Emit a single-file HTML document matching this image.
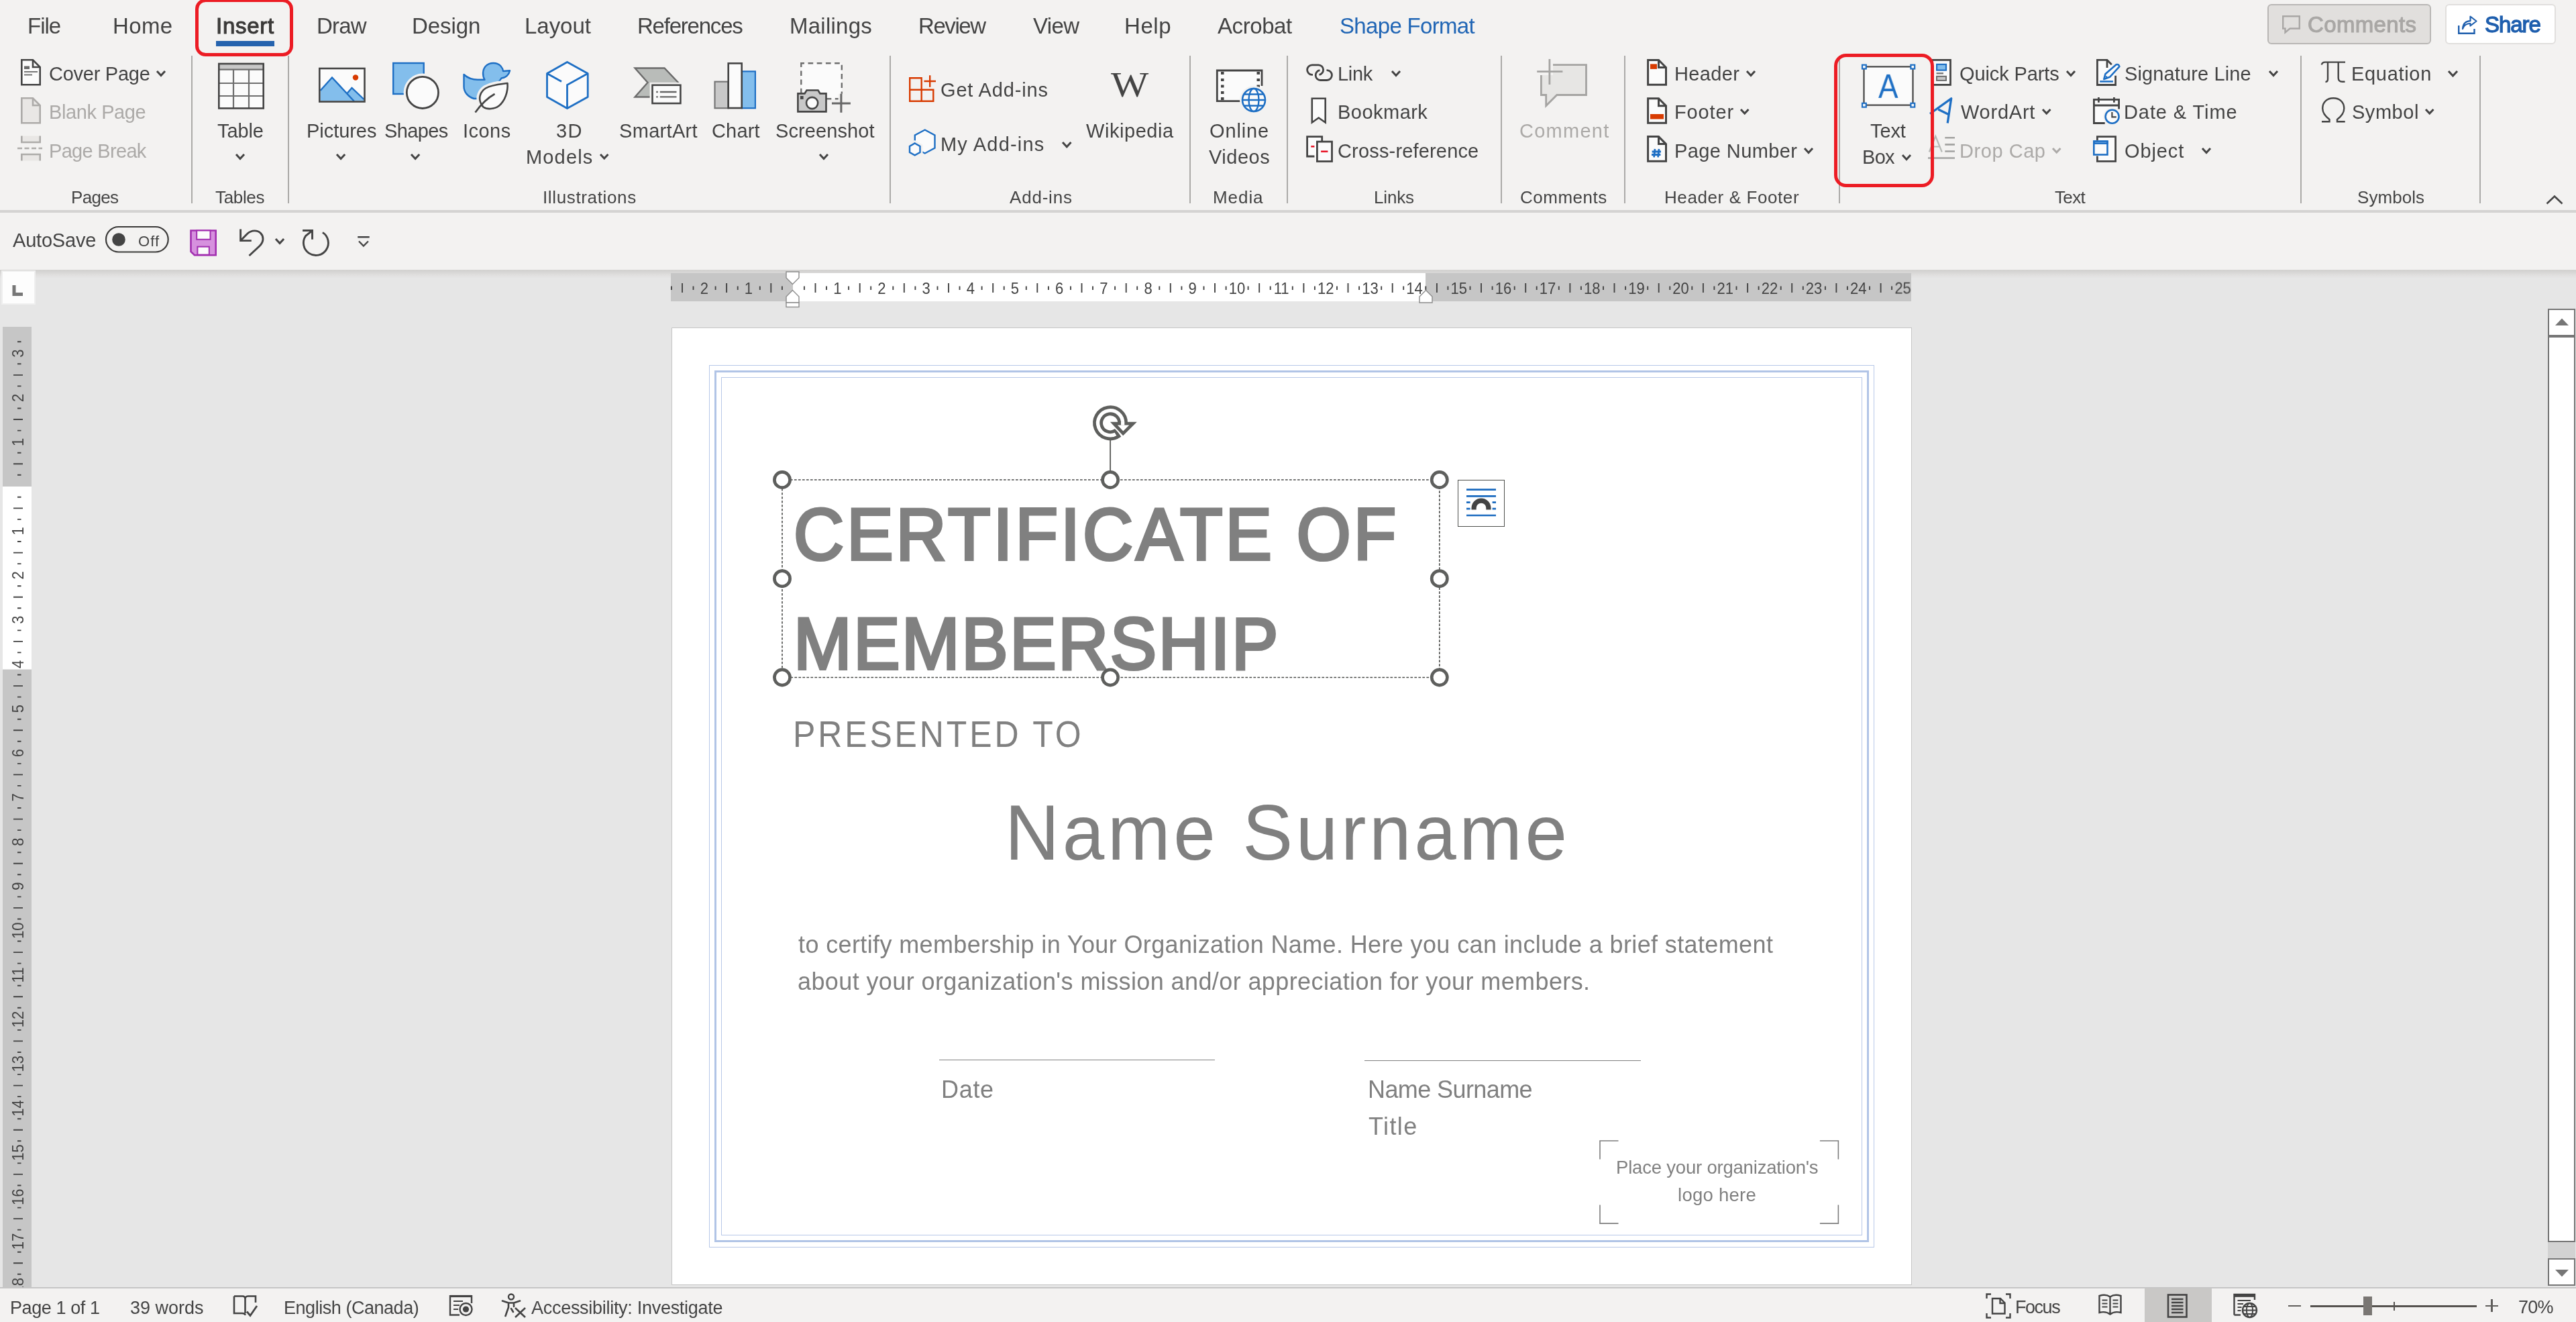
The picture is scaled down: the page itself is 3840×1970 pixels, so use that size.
<!DOCTYPE html>
<html lang="en"><head><meta charset="utf-8"><title>Certificate of Membership - Word</title>
<style>
html,body{margin:0;padding:0;}
body{width:3840px;height:1970px;overflow:hidden;background:#e6e6e6;position:relative;font-family:"Liberation Sans",sans-serif;}
.t{position:absolute;white-space:nowrap;line-height:1;display:block;-webkit-font-smoothing:antialiased;will-change:transform;}
.b{position:absolute;box-sizing:border-box;display:block;overflow:visible;}
</style></head>
<body>
<div class="b" style="left:0px;top:0px;width:3840px;height:313px;background:#f3f2f1;"></div>
<div class="b" style="left:0px;top:313px;width:3840px;height:4px;background:#d4d3d2;"></div>
<div class="b" style="left:0px;top:317px;width:3840px;height:85px;background:#f3f2f1;"></div>
<div class="b" style="left:0px;top:402px;width:3840px;height:13px;background:linear-gradient(#d2d1cf,#d6d5d4 25%,#e0dfde 60%,#e6e6e6);"></div>
<div class="b" style="left:285px;top:83px;width:2px;height:220px;background:#abaaa8;"></div>
<div class="b" style="left:429px;top:83px;width:2px;height:220px;background:#abaaa8;"></div>
<div class="b" style="left:1326px;top:83px;width:2px;height:220px;background:#abaaa8;"></div>
<div class="b" style="left:1773px;top:83px;width:2px;height:220px;background:#abaaa8;"></div>
<div class="b" style="left:1918px;top:83px;width:2px;height:220px;background:#abaaa8;"></div>
<div class="b" style="left:2237px;top:83px;width:2px;height:220px;background:#abaaa8;"></div>
<div class="b" style="left:2421px;top:83px;width:2px;height:220px;background:#abaaa8;"></div>
<div class="b" style="left:2741px;top:83px;width:2px;height:220px;background:#abaaa8;"></div>
<div class="b" style="left:3429px;top:83px;width:2px;height:220px;background:#abaaa8;"></div>
<div class="b" style="left:3696px;top:83px;width:2px;height:220px;background:#abaaa8;"></div>
<div class="b" style="left:322px;top:61px;width:87px;height:8px;background:#2563ae;"></div>
<div class="b" style="left:3380px;top:6px;width:244px;height:60px;background:#e1dfdd;border:2px solid #b9b7b5;border-radius:6px;"></div>
<div class="b" style="left:3644.5px;top:6px;width:165px;height:60px;background:#fff;border:2px solid #e1dfdd;border-radius:6px;"></div>
<div class="b" style="left:0px;top:1920px;width:3840px;height:50px;background:#f3f2f1;"></div>
<div class="b" style="left:0px;top:1918px;width:3840px;height:2px;background:#c6c6c6;"></div>
<span class="t" style="left:41.36px;top:22px;font-size:33px;font-weight:400;color:#444;letter-spacing:-1.002px;font-family:'Liberation Sans',sans-serif;">File</span>
<span class="t" style="left:168.36px;top:22px;font-size:33px;font-weight:400;color:#444;letter-spacing:0.393px;font-family:'Liberation Sans',sans-serif;">Home</span>
<span class="t" style="left:472.36px;top:22px;font-size:33px;font-weight:400;color:#444;letter-spacing:-0.805px;font-family:'Liberation Sans',sans-serif;">Draw</span>
<span class="t" style="left:614.36px;top:22px;font-size:33px;font-weight:400;color:#444;letter-spacing:-0.069px;font-family:'Liberation Sans',sans-serif;">Design</span>
<span class="t" style="left:782.36px;top:22px;font-size:33px;font-weight:400;color:#444;letter-spacing:-0.039px;font-family:'Liberation Sans',sans-serif;">Layout</span>
<span class="t" style="left:950.36px;top:22px;font-size:33px;font-weight:400;color:#444;letter-spacing:-1.222px;font-family:'Liberation Sans',sans-serif;">References</span>
<span class="t" style="left:1177.36px;top:22px;font-size:33px;font-weight:400;color:#444;letter-spacing:0.241px;font-family:'Liberation Sans',sans-serif;">Mailings</span>
<span class="t" style="left:1369.36px;top:22px;font-size:33px;font-weight:400;color:#444;letter-spacing:-1.420px;font-family:'Liberation Sans',sans-serif;">Review</span>
<span class="t" style="left:1539.84px;top:22px;font-size:33px;font-weight:400;color:#444;letter-spacing:-0.595px;font-family:'Liberation Sans',sans-serif;">View</span>
<span class="t" style="left:1676.36px;top:22px;font-size:33px;font-weight:400;color:#444;letter-spacing:0.548px;font-family:'Liberation Sans',sans-serif;">Help</span>
<span class="t" style="left:1815.00px;top:22px;font-size:33px;font-weight:400;color:#444;letter-spacing:-0.420px;font-family:'Liberation Sans',sans-serif;">Acrobat</span>
<span class="t" style="left:321.58px;top:22px;font-size:33px;font-weight:400;color:#3b3a39;letter-spacing:0.707px;font-family:'Liberation Sans',sans-serif;-webkit-text-stroke:1.1px #3b3a39;">Insert</span>
<span class="t" style="left:1996.52px;top:22px;font-size:33px;font-weight:400;color:#2166b5;letter-spacing:-0.673px;font-family:'Liberation Sans',sans-serif;">Shape Format</span>
<span class="t" style="left:72.55px;top:96px;font-size:29px;font-weight:400;color:#444;letter-spacing:-0.263px;font-family:'Liberation Sans',sans-serif;">Cover Page</span>
<span class="t" style="left:72.68px;top:153px;font-size:29px;font-weight:400;color:#acaaa8;letter-spacing:-0.412px;font-family:'Liberation Sans',sans-serif;">Blank Page</span>
<span class="t" style="left:72.68px;top:211px;font-size:29px;font-weight:400;color:#acaaa8;letter-spacing:-0.689px;font-family:'Liberation Sans',sans-serif;">Page Break</span>
<span class="t" style="left:324.42px;top:181px;font-size:29px;font-weight:400;color:#444;letter-spacing:-0.106px;font-family:'Liberation Sans',sans-serif;">Table</span>
<span class="t" style="left:456.68px;top:181px;font-size:29px;font-weight:400;color:#444;letter-spacing:-0.051px;font-family:'Liberation Sans',sans-serif;">Pictures</span>
<span class="t" style="left:572.70px;top:181px;font-size:29px;font-weight:400;color:#444;letter-spacing:-0.598px;font-family:'Liberation Sans',sans-serif;">Shapes</span>
<span class="t" style="left:689.89px;top:181px;font-size:29px;font-weight:400;color:#444;letter-spacing:0.454px;font-family:'Liberation Sans',sans-serif;">Icons</span>
<span class="t" style="left:828.84px;top:181px;font-size:29px;font-weight:400;color:#444;letter-spacing:1.490px;font-family:'Liberation Sans',sans-serif;">3D</span>
<span class="t" style="left:783.68px;top:220px;font-size:29px;font-weight:400;color:#444;letter-spacing:1.162px;font-family:'Liberation Sans',sans-serif;">Models</span>
<span class="t" style="left:922.70px;top:181px;font-size:29px;font-weight:400;color:#444;letter-spacing:0.313px;font-family:'Liberation Sans',sans-serif;">SmartArt</span>
<span class="t" style="left:1061.05px;top:181px;font-size:29px;font-weight:400;color:#444;letter-spacing:0.172px;font-family:'Liberation Sans',sans-serif;">Chart</span>
<span class="t" style="left:1155.69px;top:181px;font-size:29px;font-weight:400;color:#444;letter-spacing:0.095px;font-family:'Liberation Sans',sans-serif;">Screenshot</span>
<span class="t" style="left:1401.55px;top:120px;font-size:29px;font-weight:400;color:#444;letter-spacing:0.844px;font-family:'Liberation Sans',sans-serif;">Get Add-ins</span>
<span class="t" style="left:1401.68px;top:201px;font-size:29px;font-weight:400;color:#444;letter-spacing:1.214px;font-family:'Liberation Sans',sans-serif;">My Add-ins</span>
<span class="t" style="left:1618.86px;top:181px;font-size:29px;font-weight:400;color:#444;letter-spacing:0.554px;font-family:'Liberation Sans',sans-serif;">Wikipedia</span>
<span class="t" style="left:1803.19px;top:181px;font-size:29px;font-weight:400;color:#444;letter-spacing:0.860px;font-family:'Liberation Sans',sans-serif;">Online</span>
<span class="t" style="left:1802.36px;top:220px;font-size:29px;font-weight:400;color:#444;letter-spacing:0.500px;font-family:'Liberation Sans',sans-serif;">Videos</span>
<span class="t" style="left:1993.68px;top:96px;font-size:29px;font-weight:400;color:#444;letter-spacing:-0.298px;font-family:'Liberation Sans',sans-serif;">Link</span>
<span class="t" style="left:1993.68px;top:153px;font-size:29px;font-weight:400;color:#444;letter-spacing:0.474px;font-family:'Liberation Sans',sans-serif;">Bookmark</span>
<span class="t" style="left:1993.55px;top:211px;font-size:29px;font-weight:400;color:#444;letter-spacing:0.166px;font-family:'Liberation Sans',sans-serif;">Cross-reference</span>
<span class="t" style="left:2264.55px;top:181px;font-size:29px;font-weight:400;color:#acaaa8;letter-spacing:1.254px;font-family:'Liberation Sans',sans-serif;">Comment</span>
<span class="t" style="left:2496.28px;top:96px;font-size:29px;font-weight:400;color:#444;letter-spacing:0.336px;font-family:'Liberation Sans',sans-serif;">Header</span>
<span class="t" style="left:2496.28px;top:153px;font-size:29px;font-weight:400;color:#444;letter-spacing:0.858px;font-family:'Liberation Sans',sans-serif;">Footer</span>
<span class="t" style="left:2496.28px;top:211px;font-size:29px;font-weight:400;color:#444;letter-spacing:0.407px;font-family:'Liberation Sans',sans-serif;">Page Number</span>
<span class="t" style="left:2788.42px;top:181px;font-size:29px;font-weight:400;color:#444;letter-spacing:-0.115px;font-family:'Liberation Sans',sans-serif;">Text</span>
<span class="t" style="left:2775.68px;top:220px;font-size:29px;font-weight:400;color:#444;letter-spacing:-0.707px;font-family:'Liberation Sans',sans-serif;">Box</span>
<span class="t" style="left:2921.20px;top:96px;font-size:29px;font-weight:400;color:#444;letter-spacing:-0.111px;font-family:'Liberation Sans',sans-serif;">Quick Parts</span>
<span class="t" style="left:2922.86px;top:153px;font-size:29px;font-weight:400;color:#444;letter-spacing:0.764px;font-family:'Liberation Sans',sans-serif;">WordArt</span>
<span class="t" style="left:2920.68px;top:211px;font-size:29px;font-weight:400;color:#acaaa8;letter-spacing:0.551px;font-family:'Liberation Sans',sans-serif;">Drop Cap</span>
<span class="t" style="left:3166.70px;top:96px;font-size:29px;font-weight:400;color:#444;letter-spacing:0.120px;font-family:'Liberation Sans',sans-serif;">Signature Line</span>
<span class="t" style="left:3165.68px;top:153px;font-size:29px;font-weight:400;color:#444;letter-spacing:0.912px;font-family:'Liberation Sans',sans-serif;">Date &amp; Time</span>
<span class="t" style="left:3166.70px;top:211px;font-size:29px;font-weight:400;color:#444;letter-spacing:0.897px;font-family:'Liberation Sans',sans-serif;">Object</span>
<span class="t" style="left:3504.68px;top:96px;font-size:29px;font-weight:400;color:#444;letter-spacing:0.686px;font-family:'Liberation Sans',sans-serif;">Equation</span>
<span class="t" style="left:3505.70px;top:153px;font-size:29px;font-weight:400;color:#444;letter-spacing:0.524px;font-family:'Liberation Sans',sans-serif;">Symbol</span>
<span class="t" style="left:105.92px;top:281px;font-size:26px;font-weight:400;color:#444;letter-spacing:-0.680px;font-family:'Liberation Sans',sans-serif;">Pages</span>
<span class="t" style="left:321.48px;top:281px;font-size:26px;font-weight:400;color:#444;letter-spacing:-0.342px;font-family:'Liberation Sans',sans-serif;">Tables</span>
<span class="t" style="left:808.66px;top:281px;font-size:26px;font-weight:400;color:#444;letter-spacing:0.641px;font-family:'Liberation Sans',sans-serif;">Illustrations</span>
<span class="t" style="left:1505.00px;top:281px;font-size:26px;font-weight:400;color:#444;letter-spacing:0.795px;font-family:'Liberation Sans',sans-serif;">Add-ins</span>
<span class="t" style="left:1807.92px;top:281px;font-size:26px;font-weight:400;color:#444;letter-spacing:0.933px;font-family:'Liberation Sans',sans-serif;">Media</span>
<span class="t" style="left:2048.42px;top:281px;font-size:26px;font-weight:400;color:#444;letter-spacing:-0.180px;font-family:'Liberation Sans',sans-serif;">Links</span>
<span class="t" style="left:2265.70px;top:281px;font-size:26px;font-weight:400;color:#444;letter-spacing:0.500px;font-family:'Liberation Sans',sans-serif;">Comments</span>
<span class="t" style="left:2480.92px;top:281px;font-size:26px;font-weight:400;color:#444;letter-spacing:0.595px;font-family:'Liberation Sans',sans-serif;">Header &amp; Footer</span>
<span class="t" style="left:3063.48px;top:281px;font-size:26px;font-weight:400;color:#444;letter-spacing:-0.643px;font-family:'Liberation Sans',sans-serif;">Text</span>
<span class="t" style="left:3513.83px;top:281px;font-size:26px;font-weight:400;color:#444;letter-spacing:0.062px;font-family:'Liberation Sans',sans-serif;">Symbols</span>
<span class="t" style="left:3440.10px;top:20px;font-size:33px;font-weight:400;color:#a9a7a5;letter-spacing:0.350px;font-family:'Liberation Sans',sans-serif;-webkit-text-stroke:1.1px #a9a7a5;">Comments</span>
<span class="t" style="left:3703.97px;top:20px;font-size:33px;font-weight:400;color:#1f5fae;letter-spacing:-1.044px;font-family:'Liberation Sans',sans-serif;-webkit-text-stroke:1.3px #1f5fae;">Share</span>
<span class="t" style="left:18.60px;top:344px;font-size:29px;font-weight:400;color:#444;letter-spacing:-0.201px;font-family:'Liberation Sans',sans-serif;">AutoSave</span>
<span class="t" style="left:205.71px;top:349px;font-size:22px;font-weight:400;color:#444;letter-spacing:1.025px;font-family:'Liberation Sans',sans-serif;">Off</span>
<svg class="b" style="left:231px;top:103px;" width="18" height="12.96" viewBox="0 0 18 12.96"><path d="M3.00 3.00 L9.00 9.46 L15.00 3.00" fill="none" stroke="#444" stroke-width="3.0"/></svg>
<svg class="b" style="left:349px;top:227px;" width="18" height="12.96" viewBox="0 0 18 12.96"><path d="M3.00 3.00 L9.00 9.46 L15.00 3.00" fill="none" stroke="#444" stroke-width="3.0"/></svg>
<svg class="b" style="left:498.6px;top:227px;" width="18.2" height="13.09" viewBox="0 0 18.2 13.09"><path d="M3.00 3.00 L9.10 9.59 L15.20 3.00" fill="none" stroke="#444" stroke-width="3.0"/></svg>
<svg class="b" style="left:609.6px;top:227px;" width="18.2" height="13.09" viewBox="0 0 18.2 13.09"><path d="M3.00 3.00 L9.10 9.59 L15.20 3.00" fill="none" stroke="#444" stroke-width="3.0"/></svg>
<svg class="b" style="left:892px;top:227px;" width="17.5" height="12.64" viewBox="0 0 17.5 12.64"><path d="M3.00 3.00 L8.75 9.14 L14.50 3.00" fill="none" stroke="#444" stroke-width="3.0"/></svg>
<svg class="b" style="left:1218.5px;top:227px;" width="18.0" height="12.96" viewBox="0 0 18.0 12.96"><path d="M3.00 3.00 L9.00 9.46 L15.00 3.00" fill="none" stroke="#444" stroke-width="3.0"/></svg>
<svg class="b" style="left:1581px;top:208.5px;" width="18.5" height="13.28" viewBox="0 0 18.5 13.28"><path d="M3.00 3.00 L9.25 9.78 L15.50 3.00" fill="none" stroke="#444" stroke-width="3.0"/></svg>
<svg class="b" style="left:2072px;top:103px;" width="18" height="12.96" viewBox="0 0 18 12.96"><path d="M3.00 3.00 L9.00 9.46 L15.00 3.00" fill="none" stroke="#444" stroke-width="3.0"/></svg>
<svg class="b" style="left:2601px;top:103px;" width="18" height="12.96" viewBox="0 0 18 12.96"><path d="M3.00 3.00 L9.00 9.46 L15.00 3.00" fill="none" stroke="#444" stroke-width="3.0"/></svg>
<svg class="b" style="left:2592px;top:160px;" width="17.5" height="12.64" viewBox="0 0 17.5 12.64"><path d="M3.00 3.00 L8.75 9.14 L14.50 3.00" fill="none" stroke="#444" stroke-width="3.0"/></svg>
<svg class="b" style="left:2687px;top:217.5px;" width="18" height="12.96" viewBox="0 0 18 12.96"><path d="M3.00 3.00 L9.00 9.46 L15.00 3.00" fill="none" stroke="#444" stroke-width="3.0"/></svg>
<svg class="b" style="left:2833px;top:227.5px;" width="18" height="12.96" viewBox="0 0 18 12.96"><path d="M3.00 3.00 L9.00 9.46 L15.00 3.00" fill="none" stroke="#444" stroke-width="3.0"/></svg>
<svg class="b" style="left:3078px;top:103px;" width="18" height="12.96" viewBox="0 0 18 12.96"><path d="M3.00 3.00 L9.00 9.46 L15.00 3.00" fill="none" stroke="#444" stroke-width="3.0"/></svg>
<svg class="b" style="left:3042px;top:160px;" width="17.5" height="12.64" viewBox="0 0 17.5 12.64"><path d="M3.00 3.00 L8.75 9.14 L14.50 3.00" fill="none" stroke="#444" stroke-width="3.0"/></svg>
<svg class="b" style="left:3057px;top:217.5px;" width="17.5" height="12.64" viewBox="0 0 17.5 12.64"><path d="M3.00 3.00 L8.75 9.14 L14.50 3.00" fill="none" stroke="#acaaa8" stroke-width="3.0"/></svg>
<svg class="b" style="left:3380px;top:103px;" width="18" height="12.96" viewBox="0 0 18 12.96"><path d="M3.00 3.00 L9.00 9.46 L15.00 3.00" fill="none" stroke="#444" stroke-width="3.0"/></svg>
<svg class="b" style="left:3280px;top:217.5px;" width="18" height="12.96" viewBox="0 0 18 12.96"><path d="M3.00 3.00 L9.00 9.46 L15.00 3.00" fill="none" stroke="#444" stroke-width="3.0"/></svg>
<svg class="b" style="left:3647px;top:103px;" width="19" height="13.6" viewBox="0 0 19 13.6"><path d="M3.00 3.00 L9.50 10.10 L16.00 3.00" fill="none" stroke="#444" stroke-width="3.0"/></svg>
<svg class="b" style="left:3612.5px;top:160px;" width="17.5" height="12.64" viewBox="0 0 17.5 12.64"><path d="M3.00 3.00 L8.75 9.14 L14.50 3.00" fill="none" stroke="#444" stroke-width="3.0"/></svg>
<svg class="b" style="left:407.5px;top:353px;" width="18.1" height="13.02" viewBox="0 0 18.1 13.02"><path d="M3.00 3.00 L9.05 9.52 L15.10 3.00" fill="none" stroke="#444" stroke-width="3.0"/></svg>
<svg class="b" style="left:3792px;top:287px;" width="32" height="22" viewBox="0 0 32 22"><path d="M4.5 16.5 L16 5.5 L27.5 16.5" fill="none" stroke="#444" stroke-width="2.6"/></svg>
<svg class="b" style="left:0;top:0;" width="3840" height="420" viewBox="0 0 3840 420"><path d="M32.3 89.3H49L59.7 100V126.2H32.3z" fill="#fbfbfb" stroke="#444" stroke-width="2.6"/><path d="M49 89.3V100H59.7" fill="none" stroke="#444" stroke-width="2.6"/><rect x="36" y="98.5" width="8" height="4.5" fill="#6a6a6a"/><path d="M36 107H56 M36 111.5H48" stroke="#777" stroke-width="2"/><path d="M32.3 146.3H49L59.7 157V183.2H32.3z" fill="#e9e7e5" stroke="#adaba9" stroke-width="2.6"/><path d="M49 146.3V157H59.7" fill="none" stroke="#adaba9" stroke-width="2.6"/><path d="M32.3 202.5V212H59.7V202.5 M32.3 239.5V230H59.7V239.5" fill="#e9e7e5" stroke="#adaba9" stroke-width="2.6"/><path d="M26 221H63" stroke="#adaba9" stroke-width="2.6" stroke-dasharray="7 3.5"/><rect x="326.3" y="95" width="66.4" height="66.4" fill="#fbfbfb" stroke="none"/><rect x="326.3" y="95" width="66.4" height="8.7" fill="#c8c8c8"/><path d="M326 103.7H393 M326 124H393 M326 143H393 M348 103.7V162 M371 103.7V162" stroke="#6e6e6e" stroke-width="2.2" fill="none"/><rect x="326.3" y="95" width="66.4" height="66.4" fill="none" stroke="#444" stroke-width="2.6"/><rect x="476.3" y="102" width="67.2" height="49.5" fill="#fbfbfb" stroke="none"/><path d="M477.5 135L495 115.5L517.5 139L524.5 131L542.5 148V150.5H477.5z" fill="#83beec"/><path d="M477.5 135L495 115.5L528 151 M517.5 139L524.5 131L542.5 148" fill="none" stroke="#1e6fc4" stroke-width="2.4"/><circle cx="530" cy="115.5" r="4.2" fill="#d83b01"/><rect x="476.3" y="102" width="67.2" height="49.5" fill="none" stroke="#444" stroke-width="2.6"/><rect x="586.2" y="94" width="45.5" height="46" fill="#83beec" stroke="#1e6fc4" stroke-width="2.4"/><circle cx="629.9" cy="137.9" r="28.3" fill="#f3f2f1"/><circle cx="629.9" cy="137.9" r="23.6" fill="#fbfbfb" stroke="#444" stroke-width="2.8"/><path d="M691.5 111C697 116 705 118.8 712 118.8H722.5C719 113 719 104 724 98.5C730 92.5 741 92.5 746.5 98.5C748.5 100.8 749.8 103.5 750 106L760 105.3C759 111 754 116 747.5 116.5C746 119.5 743.5 122 740.5 124C745 128 747 135 745 140L735 147H706.5C697 144 691.5 137 691.5 129z" fill="#83beec" stroke="#1e6fc4" stroke-width="2.4" stroke-linejoin="round"/><path d="M756.5 124C745 125.5 733 126 724 131.5C716.5 136.5 713.5 144.5 716 152C717 155.5 718.5 157.5 720.5 159.5C726 163.5 737 163 744 157.5C752.5 150.5 757.5 137 756.5 124z" fill="#f3f2f1" stroke="#f3f2f1" stroke-width="9.5" stroke-linejoin="round"/><path d="M706 170.5C714 159 718 154 721 151" fill="none" stroke="#f3f2f1" stroke-width="8"/><path d="M756.5 124C745 125.5 733 126 724 131.5C716.5 136.5 713.5 144.5 716 152C717 155.5 718.5 157.5 720.5 159.5C726 163.5 737 163 744 157.5C752.5 150.5 757.5 137 756.5 124z" fill="#fbfbfb" stroke="#444" stroke-width="2.6" stroke-linejoin="round"/><path d="M708.5 167.5C716 157 724 147.5 737.5 140" fill="none" stroke="#444" stroke-width="2.6"/><path d="M845.5 92.5L876.2 109.5V144.5L845.5 161.5L815.5 144.5V109.5z" fill="#fbfbfb" stroke="#1e6fc4" stroke-width="2.8" stroke-linejoin="round"/><path d="M876.2 109.5L845.5 126.5V161 M815.5 109.5L837 121.5" fill="none" stroke="#1e6fc4" stroke-width="2.8"/><path d="M946.5 101.5H990.5L1011 123L990.5 144.5H946.5L965.5 123z" fill="#b9bcb9" stroke="#6b6b6b" stroke-width="2.4"/><rect x="968.6" y="122.9" width="50" height="36" fill="#f3f2f1"/><rect x="972.5" y="126.8" width="41.9" height="27.2" fill="#fbfbfb" stroke="#444" stroke-width="2.6"/><path d="M978.2 137H980.8 M983.8 137H1008.5 M978.2 144.4H980.8 M983.8 144.4H1008.5" stroke="#666" stroke-width="2.4"/><rect x="1065.5" y="121.7" width="20" height="39.5" fill="#c8c8c8" stroke="#777" stroke-width="2.2"/><rect x="1106" y="106.4" width="19.9" height="54.8" fill="#83beec" stroke="#1e6fc4" stroke-width="2.2"/><rect x="1085.7" y="94.4" width="20" height="66.6" fill="#fbfbfb" stroke="#444" stroke-width="2.6"/><rect x="1194.3" y="94.3" width="60.5" height="53" fill="#fbfbfb" stroke="#6e6e6e" stroke-width="2.4" stroke-dasharray="7.7 5.5" stroke-dashoffset="3"/><path d="M1189.4 139.4H1199.5L1202.5 134.5H1219.5L1222.5 139.4H1231.5V166.4H1189.4z" fill="#c8c8c8" stroke="#444" stroke-width="2.6"/><circle cx="1210.6" cy="153.5" r="8.6" fill="#fbfbfb" stroke="#444" stroke-width="2.6"/><rect x="1193" y="143" width="4.6" height="4.9" fill="#444"/><path d="M1237.5 153.9H1256 M1253.9 139.8V156" stroke="#f3f2f1" stroke-width="8.5"/><path d="M1240 153.9H1267.9 M1253.9 139.8V167.7" stroke="#666" stroke-width="3"/><path d="M1356.2 116.2H1373.7V150.8H1356.2z M1356.2 133.7H1391.3V150.8H1373.7" fill="none" stroke="#d83b01" stroke-width="2.4"/><path d="M1377.5 121H1395 M1386.2 112.3V129.8" stroke="#d83b01" stroke-width="2.4"/><path d="M1378.7 193.5L1393.5 201.5V220.5L1378.7 228.5L1363.8 220.5V201.5z" fill="#fbfbfb" stroke="#1e6fc4" stroke-width="2.4"/><path d="M1363.7 209L1375.5 215.5V228.7L1363.7 235.5L1352 228.7V215.5z" fill="#f3f2f1"/><path d="M1363.7 213.5L1371.5 218V227L1363.7 231.3L1356 227V218z" fill="#fbfbfb" stroke="#1e6fc4" stroke-width="2.4"/><path d="M1881 104.5V130 M1881 105H1814.3V150.7H1856" fill="#fbfbfb" stroke="none"/><rect x="1814.3" y="105" width="66.7" height="45.7" fill="#fbfbfb"/><path d="M1820 107v4h4.5v-4z M1820 117v4h4.5v-4z M1820 126.5v4h4.5v-4z M1820 136v4h4.5v-4z M1820 145v4h4.5v-4z M1873.5 107v4h4.5v-4z M1873.5 117v4h4.5v-4z M1873.5 126.5v4h4.5v-4z" fill="#444"/><path d="M1881 128V105H1814.3V150.7H1850" fill="none" stroke="#444" stroke-width="2.8"/><circle cx="1869" cy="149" r="21" fill="#f3f2f1"/><circle cx="1869" cy="149" r="17" fill="#fbfbfb" stroke="#1e6fc4" stroke-width="2.6"/><ellipse cx="1869" cy="149" rx="7.5" ry="17" fill="none" stroke="#1e6fc4" stroke-width="2.4"/><path d="M1852 149H1886 M1854.5 140.5H1883.5 M1854.5 157.5H1883.5" stroke="#1e6fc4" stroke-width="2.4"/><path d="M1957 111.4H1955.9A7.3 7.3 0 0 1 1955.9 96.8H1965.5A7.3 7.3 0 0 1 1966.5 111.3" fill="none" stroke="#444" stroke-width="2.8"/><path d="M1977.5 104.6H1978A7.45 7.45 0 0 1 1978 119.5H1968.3A7.45 7.45 0 0 1 1967.4 104.7" fill="none" stroke="#444" stroke-width="2.8"/><path d="M1955.8 146.8H1975.7V182.5L1965.7 175.5L1955.8 182.5z" fill="#fbfbfb" stroke="#444" stroke-width="2.6"/><path d="M1970.7 210V203.6H1948.6V233H1959.4" fill="#fbfbfb" stroke="#444" stroke-width="2.8"/><rect x="1963.4" y="211.1" width="22.1" height="29.4" fill="#fbfbfb" stroke="#444" stroke-width="2.8"/><path d="M1954.3 218.3H1959.4 M1969.1 225.7H1979.4" stroke="#e81123" stroke-width="2.6"/><path d="M2315 96.7H2364.5V141.5H2320.8L2304.7 157.6V141.5H2297.4V112.1H2315z" fill="#e7e6e4"/><path d="M2315 96.7H2364.5V141.5H2320.8L2304.7 157.6V141.5H2297.4V112.1" fill="none" stroke="#a5a4a2" stroke-width="2.8"/><path d="M2291.2 106.7H2329.4 M2309.9 88V126" stroke="#a5a4a2" stroke-width="2.8"/><path d="M2456.6 89.5H2472.5L2483.5 100.5V126.3H2456.6z" fill="#fbfbfb" stroke="#444" stroke-width="3"/><path d="M2472.5 89.5V100.5H2483.5" fill="none" stroke="#444" stroke-width="3"/><rect x="2460" y="95.4" width="10" height="7.5" fill="#d83b01"/><path d="M2456.6 146.7H2472.5L2483.5 157.7V183.29999999999998H2456.6z" fill="#fbfbfb" stroke="#444" stroke-width="3"/><path d="M2472.5 146.7V157.7H2483.5" fill="none" stroke="#444" stroke-width="3"/><rect x="2460" y="170" width="20" height="7.5" fill="#d83b01"/><path d="M2456.6 203.6H2472.5L2483.5 214.6V240.2H2456.6z" fill="#fbfbfb" stroke="#444" stroke-width="3"/><path d="M2472.5 203.6V214.6H2483.5" fill="none" stroke="#444" stroke-width="3"/><path d="M2467 222L2465.6 234.3 M2473 222L2471.6 234.3 M2462.6 226H2476 M2462 230.5H2475.4" stroke="#1e6fc4" stroke-width="2.8"/><rect x="2778.5" y="99.4" width="73" height="57.2" fill="#fbfbfb" stroke="#444" stroke-width="2.2"/><rect x="2776.0" y="96.69999999999999" width="5.8" height="5.8" fill="#fbfbfb" stroke="#1e6fc4" stroke-width="2.2"/><rect x="2848.4" y="96.69999999999999" width="5.8" height="5.8" fill="#fbfbfb" stroke="#1e6fc4" stroke-width="2.2"/><rect x="2776.0" y="153.79999999999998" width="5.8" height="5.8" fill="#fbfbfb" stroke="#1e6fc4" stroke-width="2.2"/><rect x="2848.4" y="153.79999999999998" width="5.8" height="5.8" fill="#fbfbfb" stroke="#1e6fc4" stroke-width="2.2"/><rect x="2880.3" y="89.4" width="27.2" height="37" fill="#fbfbfb" stroke="#444" stroke-width="2.8"/><rect x="2887.1" y="95.9" width="13.9" height="8.7" fill="#83beec" stroke="#1e6fc4" stroke-width="2.2"/><path d="M2886.5 109.3H2897" stroke="#777" stroke-width="2.4"/><rect x="2887" y="113.8" width="14" height="6.1" fill="#c8c8c8" stroke="#6e6e6e" stroke-width="2"/><path d="M2877 169.5L2908.7 146.8L2903.2 183.4 M2889.3 162.9L2904.7 170.6" fill="none" stroke="#1e6fc4" stroke-width="3.3" stroke-linejoin="round"/><path d="M2875.8 226.5L2885.3 203L2894.8 226.5 M2879.3 218.5H2891.3" fill="none" stroke="#b7bab7" stroke-width="2.2"/><path d="M2899.3 205.3H2914 M2899.3 215.4H2914 M2899.3 225.5H2914 M2874 235.5H2914" stroke="#a3a3a1" stroke-width="2.6"/><path d="M3153.6 112.8V126.5H3126.4V89.4H3141L3147.8 96.2" fill="#fbfbfb" stroke="#444" stroke-width="2.8"/><path d="M3141 89.4V101" fill="none" stroke="#444" stroke-width="2.8"/><path d="M3136.3 118L3138.4 110.3L3154.6 96.2Q3158.3 95 3159.4 99.2L3145 114.8z" fill="#fbfbfb" stroke="#1e6fc4" stroke-width="2.6" stroke-linejoin="round"/><circle cx="3140" cy="114.5" r="1.3" fill="#1e6fc4"/><path d="M3130.2 121.4H3149.9" stroke="#1e6fc4" stroke-width="2.6"/><path d="M3137.7 183.5H3121.4V148.4H3158.6V162.4" fill="#fbfbfb" stroke="#444" stroke-width="2.8"/><path d="M3121.4 157H3158.6 M3128.4 145V152.7 M3151.4 145V152.7" stroke="#444" stroke-width="2.8"/><circle cx="3148.6" cy="173.7" r="13.3" fill="#f3f2f1"/><circle cx="3148.6" cy="173.7" r="10" fill="#fbfbfb" stroke="#1e6fc4" stroke-width="2.6"/><path d="M3148.4 166.9V174.4H3154.8" fill="none" stroke="#444" stroke-width="2.2"/><path d="M3126.4 209V203.6H3153.6V240.4H3126.4V232.5" fill="#fbfbfb" stroke="#444" stroke-width="2.8"/><rect x="3121.3" y="210.6" width="20.2" height="19.9" fill="#fbfbfb" stroke="#1e6fc4" stroke-width="2.6"/><path d="M3120 212.2H3142.8" stroke="#1e6fc4" stroke-width="5.6"/><path d="M3123 212.4H3140" stroke="#5b9bdc" stroke-width="1.4"/><path d="M3460.8 96.5Q3461.5 92.6 3466 92.6H3496 M3470 93V118Q3470 122 3466.5 122 M3485.7 93V116Q3485.7 121.7 3491.5 121.7H3495.5" fill="none" stroke="#444" stroke-width="2.4"/><path d="M3461 181.3H3472.5V178C3464.5 172 3462.2 166 3462.2 161.5C3462.2 152 3469 146.3 3478.3 146.3C3487.5 146.3 3494.3 152 3494.3 161.5C3494.3 166 3492 172 3484 178V181.3H3495.7" fill="none" stroke="#444" stroke-width="2.4"/><path d="M3403.2 24.2H3427.8V42.5H3413.5L3406.5 48.5V42.5H3403.2z" fill="none" stroke="#a9a7a5" stroke-width="2.4"/><path d="M3665.2 38V49.8H3688.5V43" fill="none" stroke="#1f5fae" stroke-width="2.4"/><path d="M3671 43C3671.5 35 3676 31.5 3682.5 31.2V24.5L3691.5 31.5L3682.5 38.5V35C3677 35 3673 37.5 3671 43z" fill="none" stroke="#1f5fae" stroke-width="2.2" stroke-linejoin="round"/><rect x="158" y="338" width="92.7" height="37.5" rx="18.75" fill="none" stroke="#3b3a39" stroke-width="2.2"/><circle cx="177" cy="357" r="9.8" fill="#444"/><path d="M284.5 343.5H321.7V380.2H290L284.5 375z" fill="#d691de" stroke="#a22fb0" stroke-width="2.6"/><rect x="293.2" y="343.5" width="20.3" height="13.3" fill="#fbfbfb" stroke="#a22fb0" stroke-width="2"/><rect x="294.4" y="367.6" width="17.4" height="12" fill="#fbfbfb" stroke="#a22fb0" stroke-width="2"/><path d="M358.6 341.6V358.6H374.8" fill="none" stroke="#444" stroke-width="2.9"/><path d="M358.9 358.3L368 349C371.5 345.5 375.5 343.9 379.5 343.9C387 343.9 392 349.5 392 356C392 360.5 390 363.5 387 366.5L371.5 381" fill="none" stroke="#444" stroke-width="2.9"/><path d="M451.1 343.5H465.5V356.8" fill="none" stroke="#444" stroke-width="2.9"/><path d="M465.2 343.8L455.6 351.6A18.5 18.5 0 1 0 480.9 346.4" fill="none" stroke="#444" stroke-width="2.9"/><path d="M533.2 353.3H550.7 M535 359.5L541.9 366.5L548.9 359.5" fill="none" stroke="#444" stroke-width="2.4"/></svg>
<span class="t" style="left:1656.00px;top:100px;font-size:52.5px;font-weight:400;color:#444;letter-spacing:0.000px;font-family:'Liberation Serif',serif;transform:scale(1.1348,1.0000);transform-origin:0 44px;">W</span>
<span class="t" style="left:2800.40px;top:106px;font-size:47.5px;font-weight:400;color:#1e6fc4;letter-spacing:0.000px;font-family:'Liberation Sans',sans-serif;transform:scale(0.9307,1.0500);transform-origin:0 40px;">A</span>
<div class="b" style="left:290.8px;top:-2.2px;width:146.3px;height:86.1px;border:5.3px solid #ec1c24;border-radius:15.5px;"></div>
<div class="b" style="left:2734.1px;top:79.6px;width:148.9px;height:199.2px;border:5.3px solid #ec1c24;border-radius:18px;"></div>
<svg class="b" style="left:1000px;top:407px;will-change:transform;" width="1849" height="42" viewBox="0 0 1849 42"><rect x="0" y="0" width="1849" height="42" fill="#c6c6c6"/><rect x="182" y="0" width="943" height="42" fill="#fff"/><path d="M0.9 19.5v5.5M17.0 15v14M33.5 19.5v5.5M66.6 19.5v5.5M83.1 15v14M99.7 19.5v5.5M132.8 19.5v5.5M149.3 15v14M165.9 19.5v5.5M198.9 19.5v5.5M215.5 15v14M232.0 19.5v5.5M265.1 19.5v5.5M281.7 15v14M298.2 19.5v5.5M331.3 19.5v5.5M347.8 15v14M364.4 19.5v5.5M397.5 19.5v5.5M414.0 15v14M430.5 19.5v5.5M463.6 19.5v5.5M480.2 15v14M496.7 19.5v5.5M529.8 19.5v5.5M546.3 15v14M562.9 19.5v5.5M596.0 19.5v5.5M612.5 15v14M629.0 19.5v5.5M662.1 19.5v5.5M678.7 15v14M695.2 19.5v5.5M728.3 19.5v5.5M744.8 15v14M761.4 19.5v5.5M794.5 19.5v5.5M811.0 15v14M827.6 19.5v5.5M860.6 19.5v5.5M877.2 15v14M893.7 19.5v5.5M926.8 19.5v5.5M943.4 15v14M959.9 19.5v5.5M993.0 19.5v5.5M1009.5 15v14M1026.1 19.5v5.5M1059.2 19.5v5.5M1075.7 15v14M1092.2 19.5v5.5M1125.3 19.5v5.5M1141.9 15v14M1158.4 19.5v5.5M1191.5 19.5v5.5M1208.0 15v14M1224.6 19.5v5.5M1257.7 19.5v5.5M1274.2 15v14M1290.7 19.5v5.5M1323.8 19.5v5.5M1340.4 15v14M1356.9 19.5v5.5M1390.0 19.5v5.5M1406.5 15v14M1423.1 19.5v5.5M1456.2 19.5v5.5M1472.7 15v14M1489.3 19.5v5.5M1522.3 19.5v5.5M1538.9 15v14M1555.4 19.5v5.5M1588.5 19.5v5.5M1605.1 15v14M1621.6 19.5v5.5M1654.7 19.5v5.5M1671.2 15v14M1687.8 19.5v5.5M1720.9 19.5v5.5M1737.4 15v14M1753.9 19.5v5.5M1787.0 19.5v5.5M1803.6 15v14M1820.1 19.5v5.5" stroke="#444" stroke-width="1.9" fill="none"/><g font-family="'Liberation Sans',sans-serif" font-size="24.5" fill="#444" text-anchor="middle"><text transform="translate(49.9 30.6) scale(0.9 1)">2</text><text transform="translate(116.0 30.6) scale(0.9 1)">1</text><text transform="translate(248.4 30.6) scale(0.9 1)">1</text><text transform="translate(314.5 30.6) scale(0.9 1)">2</text><text transform="translate(380.7 30.6) scale(0.9 1)">3</text><text transform="translate(446.9 30.6) scale(0.9 1)">4</text><text transform="translate(513.0 30.6) scale(0.9 1)">5</text><text transform="translate(579.2 30.6) scale(0.9 1)">6</text><text transform="translate(645.4 30.6) scale(0.9 1)">7</text><text transform="translate(711.6 30.6) scale(0.9 1)">8</text><text transform="translate(777.7 30.6) scale(0.9 1)">9</text><text transform="translate(843.9 30.6) scale(0.9 1)">10</text><text transform="translate(910.1 30.6) scale(0.9 1)">11</text><text transform="translate(976.2 30.6) scale(0.9 1)">12</text><text transform="translate(1042.4 30.6) scale(0.9 1)">13</text><text transform="translate(1108.6 30.6) scale(0.9 1)">14</text><text transform="translate(1174.8 30.6) scale(0.9 1)">15</text><text transform="translate(1240.9 30.6) scale(0.9 1)">16</text><text transform="translate(1307.1 30.6) scale(0.9 1)">17</text><text transform="translate(1373.3 30.6) scale(0.9 1)">18</text><text transform="translate(1439.4 30.6) scale(0.9 1)">19</text><text transform="translate(1505.6 30.6) scale(0.9 1)">20</text><text transform="translate(1571.8 30.6) scale(0.9 1)">21</text><text transform="translate(1637.9 30.6) scale(0.9 1)">22</text><text transform="translate(1704.1 30.6) scale(0.9 1)">23</text><text transform="translate(1770.3 30.6) scale(0.9 1)">24</text><text transform="translate(1836.5 30.6) scale(0.9 1)">25</text></g></svg>
<svg class="b" style="left:1171.1px;top:403.5px;" width="21" height="55" viewBox="0 0 21 55"><path d="M1 1h19v9l-9.5 9.5L1 10z" fill="#fff" stroke="#8a8a8a" stroke-width="1.4"/><path d="M1 47v-9l9.5-9.5L20 38v9z" fill="#fff" stroke="#8a8a8a" stroke-width="1.4"/><rect x="1" y="47" width="19" height="6.5" fill="#fff" stroke="#8a8a8a" stroke-width="1.4"/></svg>
<svg class="b" style="left:2115px;top:432.3px;" width="21" height="20" viewBox="0 0 21 20"><path d="M1 19v-9l9.5-9.5L20 10v9z" fill="#fff" stroke="#8a8a8a" stroke-width="1.4"/></svg>
<div class="b" style="left:2px;top:403px;width:51px;height:51px;background:#fdfdfd;border:2px solid #efefef;"></div>
<svg class="b" style="left:18px;top:425px;" width="17" height="17" viewBox="0 0 17 17"><path d="M3 0v13.5h13" fill="none" stroke="#777" stroke-width="5"/></svg>
<svg class="b" style="left:4px;top:487px;overflow:hidden;will-change:transform;" width="43" height="1431" viewBox="0 0 43 1431"><rect x="0" y="0" width="43" height="1431" fill="#c6c6c6"/><rect x="0" y="238" width="43" height="272.5" fill="#fff"/><path d="M22 22.2h5.5M22 55.3h5.5M16 71.9h14M22 88.4h5.5M22 121.5h5.5M16 138.0h14M22 154.6h5.5M22 187.7h5.5M16 204.2h14M22 220.8h5.5M22 253.8h5.5M16 270.4h14M22 286.9h5.5M22 320.0h5.5M16 336.6h14M22 353.1h5.5M22 386.2h5.5M16 402.7h14M22 419.3h5.5M22 452.4h5.5M16 468.9h14M22 485.4h5.5M22 518.5h5.5M16 535.1h14M22 551.6h5.5M22 584.7h5.5M16 601.2h14M22 617.8h5.5M22 650.9h5.5M16 667.4h14M22 683.9h5.5M22 717.0h5.5M16 733.6h14M22 750.1h5.5M22 783.2h5.5M16 799.7h14M22 816.3h5.5M22 849.4h5.5M16 865.9h14M22 882.5h5.5M22 915.5h5.5M16 932.1h14M22 948.6h5.5M22 981.7h5.5M16 998.3h14M22 1014.8h5.5M22 1047.9h5.5M16 1064.4h14M22 1081.0h5.5M22 1114.1h5.5M16 1130.6h14M22 1147.1h5.5M22 1180.2h5.5M16 1196.8h14M22 1213.3h5.5M22 1246.4h5.5M16 1262.9h14M22 1279.5h5.5M22 1312.6h5.5M16 1329.1h14M22 1345.6h5.5M22 1378.7h5.5M16 1395.3h14M22 1411.8h5.5" stroke="#444" stroke-width="1.9" fill="none"/><g font-family="'Liberation Sans',sans-serif" font-size="24.5" fill="#444" text-anchor="middle"><text transform="translate(31 39.6) rotate(-90) scale(0.9 1)">3</text><text transform="translate(31 105.8) rotate(-90) scale(0.9 1)">2</text><text transform="translate(31 171.9) rotate(-90) scale(0.9 1)">1</text><text transform="translate(31 304.3) rotate(-90) scale(0.9 1)">1</text><text transform="translate(31 370.4) rotate(-90) scale(0.9 1)">2</text><text transform="translate(31 436.6) rotate(-90) scale(0.9 1)">3</text><text transform="translate(31 502.8) rotate(-90) scale(0.9 1)">4</text><text transform="translate(31 569.0) rotate(-90) scale(0.9 1)">5</text><text transform="translate(31 635.1) rotate(-90) scale(0.9 1)">6</text><text transform="translate(31 701.3) rotate(-90) scale(0.9 1)">7</text><text transform="translate(31 767.5) rotate(-90) scale(0.9 1)">8</text><text transform="translate(31 833.6) rotate(-90) scale(0.9 1)">9</text><text transform="translate(31 899.8) rotate(-90) scale(0.9 1)">10</text><text transform="translate(31 966.0) rotate(-90) scale(0.9 1)">11</text><text transform="translate(31 1032.1) rotate(-90) scale(0.9 1)">12</text><text transform="translate(31 1098.3) rotate(-90) scale(0.9 1)">13</text><text transform="translate(31 1164.5) rotate(-90) scale(0.9 1)">14</text><text transform="translate(31 1230.6) rotate(-90) scale(0.9 1)">15</text><text transform="translate(31 1296.8) rotate(-90) scale(0.9 1)">16</text><text transform="translate(31 1363.0) rotate(-90) scale(0.9 1)">17</text><text transform="translate(31 1429.2) rotate(-90) scale(0.9 1)">18</text></g></svg>
<div class="b" style="left:1001px;top:488px;width:1849px;height:1427px;background:#fff;border:1px solid #c6c6c6;"></div>
<div class="b" style="left:1057px;top:544px;width:1737px;height:1315px;border:1px solid #b7c8e8;"></div>
<div class="b" style="left:1065px;top:552px;width:1721px;height:1299px;border:3px solid #b1c4e6;"></div>
<div class="b" style="left:1075px;top:562px;width:1701px;height:1279px;border:1px solid #b7c8e8;"></div>
<span class="t" style="left:1183.10px;top:746px;font-size:104.0px;font-weight:400;color:#808080;letter-spacing:4.065px;font-family:'Liberation Sans',sans-serif;transform:scale(1.0000,1.0566);transform-origin:0 88px;-webkit-text-stroke:4.0px #808080;">CERTIFICATE OF</span>
<span class="t" style="left:1182.68px;top:909px;font-size:104.0px;font-weight:400;color:#808080;letter-spacing:2.560px;font-family:'Liberation Sans',sans-serif;transform:scale(1.0000,1.0566);transform-origin:0 88px;-webkit-text-stroke:4.0px #808080;">MEMBERSHIP</span>
<span class="t" style="left:1181.50px;top:1071px;font-size:50.0px;font-weight:400;color:#808080;letter-spacing:3.859px;font-family:'Liberation Sans',sans-serif;transform:scale(1.0000,1.1250);transform-origin:0 42px;">PRESENTED TO</span>
<span class="t" style="left:1498.01px;top:1186px;font-size:112.4px;font-weight:400;color:#808080;letter-spacing:4.641px;font-family:'Liberation Sans',sans-serif;transform:scale(1.0000,1.0410);transform-origin:0 95px;">Name Surname</span>
<span class="t" style="left:1189.96px;top:1390px;font-size:36px;font-weight:400;color:#808080;letter-spacing:0.374px;font-family:'Liberation Sans',sans-serif;transform:scale(1.0000,1.0300);transform-origin:0 30px;">to certify membership in Your Organization Name. Here you can include a brief statement</span>
<span class="t" style="left:1188.56px;top:1445px;font-size:36px;font-weight:400;color:#808080;letter-spacing:0.395px;font-family:'Liberation Sans',sans-serif;transform:scale(1.0000,1.0300);transform-origin:0 30px;">about your organization's mission and/or appreciation for your members.</span>
<div class="b" style="left:1399.6px;top:1578.6px;width:411.7px;height:1.3px;background:#808080;"></div>
<div class="b" style="left:2034.2px;top:1579.5px;width:412.2px;height:1.3px;background:#808080;"></div>
<span class="t" style="left:1402.62px;top:1606px;font-size:36px;font-weight:400;color:#808080;letter-spacing:0.680px;font-family:'Liberation Sans',sans-serif;transform:scale(1.0000,1.0300);transform-origin:0 30px;">Date</span>
<span class="t" style="left:2039.12px;top:1606px;font-size:36px;font-weight:400;color:#808080;letter-spacing:-0.591px;font-family:'Liberation Sans',sans-serif;transform:scale(1.0000,1.0300);transform-origin:0 30px;">Name Surname</span>
<span class="t" style="left:2039.68px;top:1661px;font-size:36px;font-weight:400;color:#808080;letter-spacing:1.385px;font-family:'Liberation Sans',sans-serif;transform:scale(1.0000,1.0300);transform-origin:0 30px;">Title</span>
<svg class="b" style="left:2382.8px;top:1697.8px;" width="359.39999999999964" height="127.10000000000014" viewBox="0 0 359.39999999999964 127.10000000000014"><path d="M2 29.5V2h27.5 M329.89999999999964 2h27.5v27.5 M2 97.60000000000014v27.5h27.5 M329.89999999999964 125.10000000000014h27.5v-27.5" fill="none" stroke="#7d7d7d" stroke-width="1.6"/></svg>
<span class="t" style="left:2409.00px;top:1726px;font-size:27.5px;font-weight:400;color:#808080;letter-spacing:-0.199px;font-family:'Liberation Sans',sans-serif;">Place your organization's</span>
<span class="t" style="left:2501.41px;top:1767px;font-size:27.5px;font-weight:400;color:#808080;letter-spacing:0.269px;font-family:'Liberation Sans',sans-serif;">logo here</span>
<svg class="b" style="left:0;top:0;" width="3840" height="1970" viewBox="0 0 3840 1970"><rect x="1166" y="715" width="979.8000000000002" height="294.5" fill="none" stroke="#4a4b49" stroke-width="1.6" stroke-dasharray="3.7 2.3"/><path d="M1655.1 655V702" stroke="#5e5f5d" stroke-width="1.9"/><circle cx="1166" cy="715" r="11.6" fill="#fff" stroke="#5e5f5d" stroke-width="4.7"/><circle cx="1655.1" cy="715" r="11.6" fill="#fff" stroke="#5e5f5d" stroke-width="4.7"/><circle cx="2145.8" cy="715" r="11.6" fill="#fff" stroke="#5e5f5d" stroke-width="4.7"/><circle cx="1166" cy="862.2" r="11.6" fill="#fff" stroke="#5e5f5d" stroke-width="4.7"/><circle cx="2145.8" cy="862.2" r="11.6" fill="#fff" stroke="#5e5f5d" stroke-width="4.7"/><circle cx="1166" cy="1009.5" r="11.6" fill="#fff" stroke="#5e5f5d" stroke-width="4.7"/><circle cx="1655.1" cy="1009.5" r="11.6" fill="#fff" stroke="#5e5f5d" stroke-width="4.7"/><circle cx="2145.8" cy="1009.5" r="11.6" fill="#fff" stroke="#5e5f5d" stroke-width="4.7"/><g transform="translate(1655.1 630.3)" stroke-width="4.8" stroke="#5e5f5d" fill="#fff"><path d="M12.85 19.8A23.6 23.6 0 1 1 23.6 0.8H13.5A13.5 13.5 0 1 0 7.35 11.3z"/><path d="M4.3 -0.5L19.6 16.3" stroke="#fff" stroke-width="8.6"/><path d="M5.3 0.8H33.9L19.1 15.6z"/><rect x="15.9" y="-2.2" width="5.3" height="5.6" stroke="none"/></g></svg>
<div class="b" style="left:2173px;top:715px;width:70px;height:70px;background:#fff;border:1.9px solid #4d4f4c;"></div>
<svg class="b" style="left:2186px;top:726px;" width="44" height="46" viewBox="0 0 44 46"><path d="M0 3.7H44 M0 13.3H44 M0 42H44" stroke="#1a6abf" stroke-width="2.7"/><path d="M0 22.7H5.6 M38.6 22.7H44 M0 32.2H5.6 M38.6 32.2H44" stroke="#1a6abf" stroke-width="2.7"/><path d="M7.5 33.4V31a14.5 14.5 0 0 1 29 0V33.4H29.3V31a7.3 7.3 0 0 0 -14.6 0V33.4z" fill="#444"/></svg>
<div class="b" style="left:3798px;top:460px;width:41px;height:42px;background:#fff;border:2.5px solid #767676;"></div>
<svg class="b" style="left:3808px;top:474px;" width="22" height="12" viewBox="0 0 22 12"><path d="M1 11L11 0.5L21 11z" fill="#767676"/></svg>
<div class="b" style="left:3798px;top:499px;width:41px;height:1352px;background:#fff;border:2.5px solid #767676;border-top-width:4px;"></div>
<div class="b" style="left:3798px;top:1851px;width:41px;height:24px;background:#d2d2d2;"></div>
<div class="b" style="left:3798px;top:1875px;width:41px;height:41px;background:#fff;border:2.5px solid #767676;"></div>
<svg class="b" style="left:3808px;top:1890.5px;" width="22" height="12" viewBox="0 0 22 12"><path d="M1 1L11 11.5L21 1z" fill="#767676"/></svg>
<span class="t" style="left:14.54px;top:1936px;font-size:27px;font-weight:400;color:#444;letter-spacing:-0.403px;font-family:'Liberation Sans',sans-serif;">Page 1 of 1</span>
<span class="t" style="left:194.22px;top:1936px;font-size:27px;font-weight:400;color:#444;letter-spacing:-0.014px;font-family:'Liberation Sans',sans-serif;">39 words</span>
<span class="t" style="left:423.24px;top:1936px;font-size:27px;font-weight:400;color:#444;letter-spacing:-0.460px;font-family:'Liberation Sans',sans-serif;">English (Canada)</span>
<span class="t" style="left:792.30px;top:1936px;font-size:27px;font-weight:400;color:#444;letter-spacing:-0.285px;font-family:'Liberation Sans',sans-serif;">Accessibility: Investigate</span>
<span class="t" style="left:3003.64px;top:1935px;font-size:27px;font-weight:400;color:#444;letter-spacing:-1.468px;font-family:'Liberation Sans',sans-serif;">Focus</span>
<span class="t" style="left:3754.45px;top:1935px;font-size:27px;font-weight:400;color:#444;letter-spacing:-0.753px;font-family:'Liberation Sans',sans-serif;">70%</span>
<svg class="b" style="left:346px;top:1929px;" width="40" height="36" viewBox="0 0 40 36"><path d="M3 2.5H15.5Q19.5 2.5 19.5 7V28 M19.5 7Q19.5 2.5 23.5 2.5H35V12" fill="none" stroke="#444" stroke-width="2.6"/><path d="M3 2.5V28H15Q19.5 28 19.5 31" fill="none" stroke="#444" stroke-width="2.6"/><path d="M22 25.5L27 31.5L37 17" fill="none" stroke="#444" stroke-width="2.8"/></svg>
<svg class="b" style="left:668px;top:1928px;" width="40" height="36" viewBox="0 0 40 36"><path d="M3 3.5H35" stroke="#444" stroke-width="3.2"/><path d="M3 2V31.5H17 M35 2V14" fill="none" stroke="#444" stroke-width="2.4"/><path d="M8 11H22 M8 17H17 M8 23H15" stroke="#444" stroke-width="2.2"/><circle cx="26.5" cy="23" r="9" fill="none" stroke="#444" stroke-width="2.4"/><circle cx="26.5" cy="23" r="4.6" fill="#444"/></svg>
<svg class="b" style="left:746px;top:1926px;" width="42" height="40" viewBox="0 0 42 40"><circle cx="16" cy="6.5" r="4" fill="none" stroke="#444" stroke-width="2.4"/><path d="M3 12.5L12 15.5H20L29 12.5 M12 15.5V22L7.5 35 M20 15.5V21 M16 24L19 29" fill="none" stroke="#444" stroke-width="2.6" stroke-linecap="round" stroke-linejoin="round"/><path d="M22 23L37 37 M37 23L22 37" stroke="#444" stroke-width="2.6"/></svg>
<svg class="b" style="left:2960px;top:1927px;" width="38" height="38" viewBox="0 0 38 38"><path d="M1.5 8V1.5H8 M30 1.5H36.5V8 M1.5 30V36.5H8 M30 36.5H36.5V30" fill="none" stroke="#444" stroke-width="2.4"/><path d="M10 8H22L28.5 14.5V30.5H10z M21.5 8.5V15H28" fill="none" stroke="#444" stroke-width="2.4"/></svg>
<svg class="b" style="left:3127px;top:1927px;" width="38" height="36" viewBox="0 0 38 36"><path d="M2.5 4Q12 1 18.5 5.5Q25 1 34.5 4V29Q25 26.5 18.5 31.5Q12 26.5 2.5 29z M18.5 5.5V31" fill="none" stroke="#444" stroke-width="2.4"/><path d="M6.5 10.5H14.5 M6.5 15.5H14.5 M6.5 20.5H14.5 M22.5 10.5H30.5 M22.5 15.5H30.5 M22.5 20.5H30.5" stroke="#444" stroke-width="2"/></svg>
<div class="b" style="left:3197px;top:1920px;width:100px;height:50px;background:#c9c8c6;"></div>
<svg class="b" style="left:3230px;top:1928px;" width="32" height="36" viewBox="0 0 32 36"><rect x="2" y="1.5" width="27.5" height="33" fill="none" stroke="#444" stroke-width="2.6"/><path d="M7 8H24.5 M7 13H24.5 M7 18H24.5 M7 23H24.5 M7 28H24.5" stroke="#444" stroke-width="2.4"/></svg>
<svg class="b" style="left:3328px;top:1927px;" width="40" height="38" viewBox="0 0 40 38"><path d="M2.5 32.5V2H33V10 M2.5 32.5H12" fill="none" stroke="#444" stroke-width="2.4"/><path d="M2 4H33.5" stroke="#444" stroke-width="3.6"/><path d="M7.5 11H27 M7.5 16H16 M7.5 21H13.5 M7.5 26H12.5" stroke="#444" stroke-width="2"/><circle cx="25.5" cy="25.5" r="10.5" fill="#f3f2f1" stroke="#444" stroke-width="2.4"/><ellipse cx="25.5" cy="25.5" rx="4.6" ry="10.5" fill="none" stroke="#444" stroke-width="2"/><path d="M15 25.5H36 M17 20H34 M17 31H34" stroke="#444" stroke-width="2"/></svg>
<div class="b" style="left:3411px;top:1944.6px;width:19px;height:2.2px;background:#605e5c;"></div>
<div class="b" style="left:3443.5px;top:1945px;width:248.5px;height:3px;background:#55524f;"></div>
<div class="b" style="left:3523px;top:1932px;width:13px;height:27.5px;background:#797673;"></div>
<div class="b" style="left:3567.5px;top:1939.5px;width:2.4px;height:13.5px;background:#55524f;"></div>
<div class="b" style="left:3705px;top:1944.6px;width:19px;height:2.2px;background:#605e5c;"></div>
<div class="b" style="left:3713.4px;top:1936.2px;width:2.2px;height:19px;background:#605e5c;"></div>
</body></html>
